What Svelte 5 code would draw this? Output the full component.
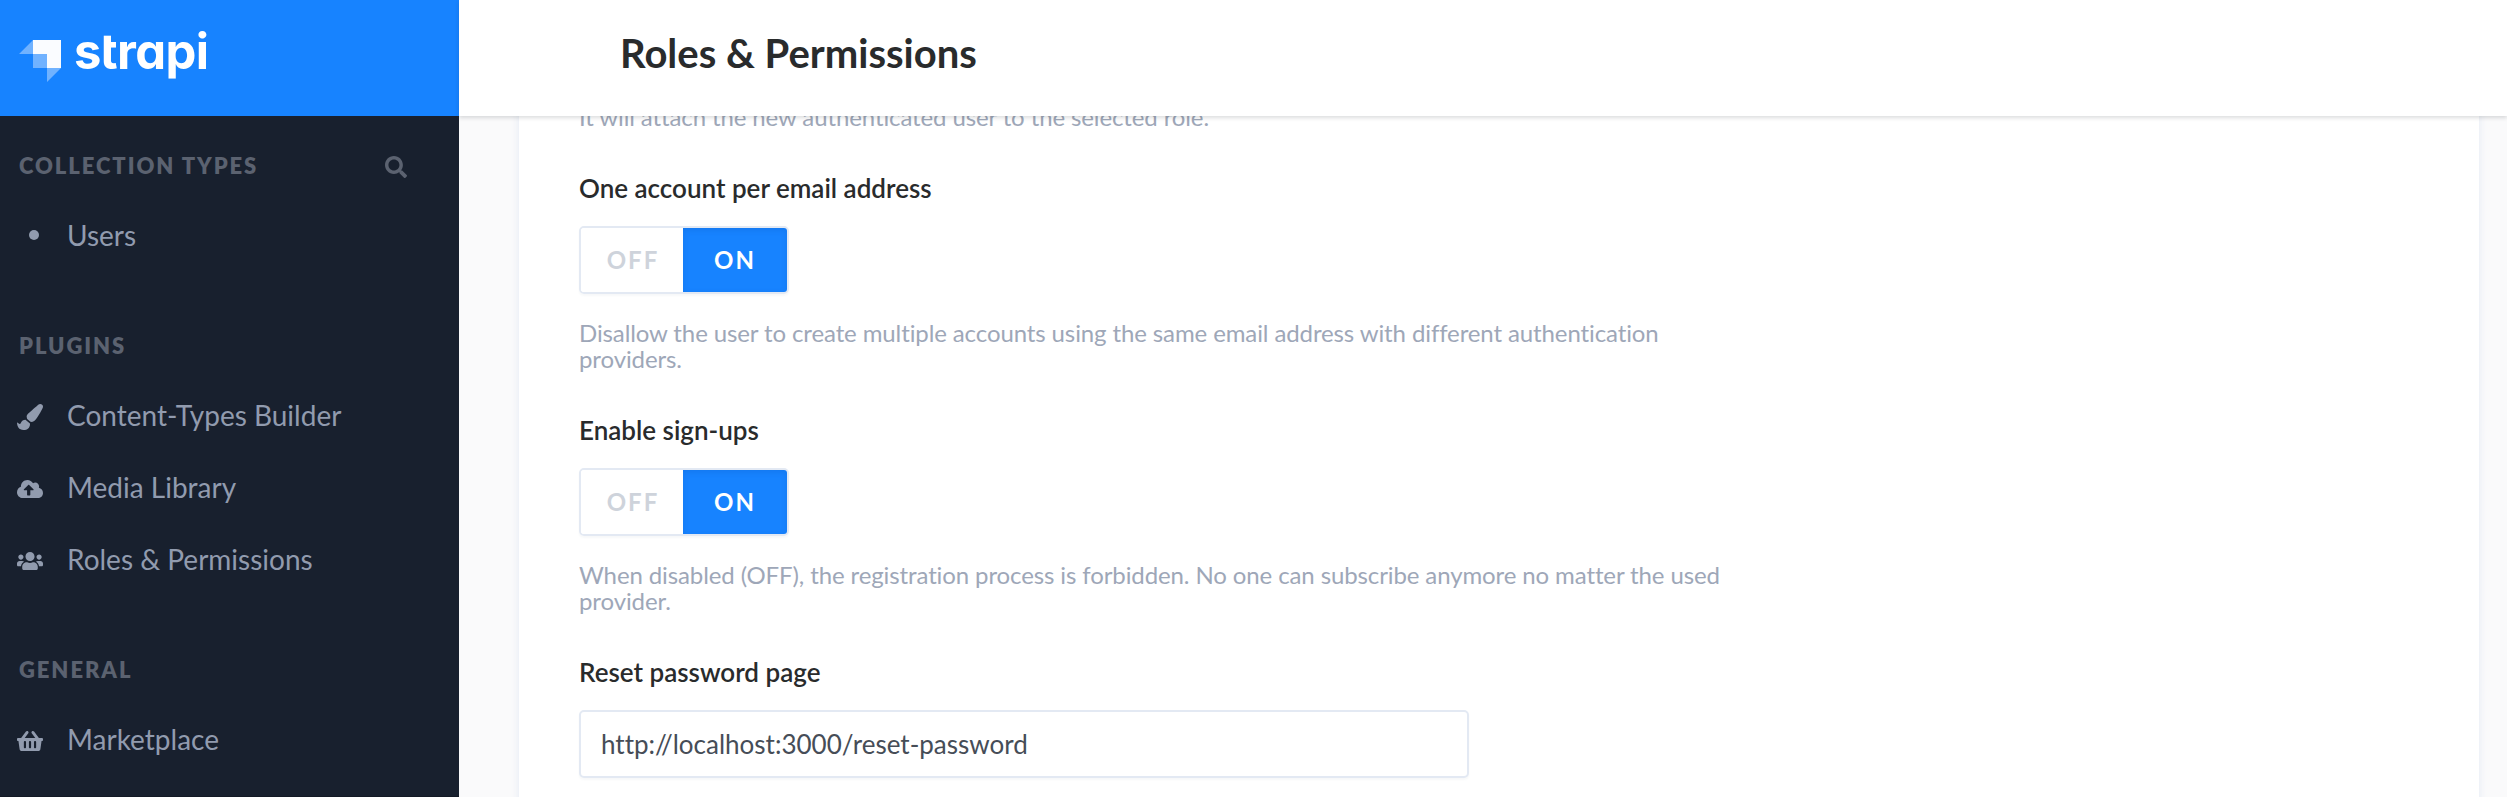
<script>
  const icons = {
    brush: {
      box: '0 0 512 512',
      d: 'M167.02 309.34c-40.12 2.58-76.53 17.86-97.19 72.3-2.35 6.21-8 9.98-14.59 9.98-11.11 0-45.46-27.67-55.25-34.35C0 439.62 37.93 512 128 512c75.86 0 128-43.77 128-120.19 0-3.11-.65-6.08-.97-9.13l-88.01-73.34zM457.89 0c-15.16 0-29.37 6.71-40.21 16.45C213.27 199.05 192 203.34 192 257.09c0 13.7 3.25 26.76 8.73 38.7l63.82 53.18c7.21 1.8 14.64 3.03 22.39 3.03 62.11 0 98.11-45.47 211.16-256.46 7.38-14.35 13.9-29.85 13.9-45.99C512 20.64 486 0 457.89 0z'
    },
    cloud: {
      box: '0 0 640 512',
      d: 'M537.6 226.6c4.1-10.7 6.4-22.4 6.4-34.6 0-53-43-96-96-96-19.7 0-38.1 6-53.3 16.2C367 64.2 315.3 32 256 32c-88.4 0-160 71.6-160 160 0 2.7.1 5.4.2 8.1C40.2 219.8 0 273.2 0 336c0 79.5 64.5 144 144 144h368c70.7 0 128-57.3 128-128 0-61.9-44-113.6-102.4-125.4zM393.4 288H328v112c0 8.8-7.2 16-16 16h-48c-8.8 0-16-7.2-16-16V288h-65.4c-14.3 0-21.4-17.2-11.3-27.3l105.4-105.4c6.2-6.2 16.4-6.2 22.6 0l105.4 105.4c10.1 10.1 2.9 27.3-11.3 27.3z'
    },
    users: {
      box: '0 0 640 512',
      d: 'M96 224c35.3 0 64-28.7 64-64s-28.7-64-64-64-64 28.7-64 64 28.7 64 64 64zm448 0c35.3 0 64-28.7 64-64s-28.7-64-64-64-64 28.7-64 64 28.7 64 64 64zm32 32h-64c-17.6 0-33.5 7.1-45.1 18.6 40.3 22.1 68.9 62 75.1 109.4h66c17.7 0 32-14.3 32-32v-32c0-35.3-28.7-64-64-64zm-256 0c61.9 0 112-50.1 112-112S381.9 32 320 32 208 82.1 208 144s50.1 112 112 112zm76.8 32h-8.3c-20.8 10-43.9 16-68.5 16s-47.6-6-68.5-16h-8.3C179.6 288 128 339.6 128 403.2V432c0 26.5 21.5 48 48 48h288c26.5 0 48-21.5 48-48v-28.8c0-63.6-51.6-115.2-115.2-115.2zm-223.7-13.4C161.5 263.1 145.6 256 128 256H64c-35.3 0-64 28.7-64 64v32c0 17.7 14.3 32 32 32h65.9c6.3-47.4 34.9-87.3 75.2-109.4z'
    },
    basket: {
      box: '0 0 576 512',
      d: 'M576 216v16c0 13.255-10.745 24-24 24h-8l-26.113 182.788C514.509 462.435 494.257 480 470.37 480H105.63c-23.887 0-44.139-17.565-47.518-41.212L32 256h-8c-13.255 0-24-10.745-24-24v-16c0-13.255 10.745-24 24-24h67.341l106.78-146.821c10.395-14.292 30.407-17.453 44.701-7.058 14.293 10.395 17.453 30.408 7.058 44.701L170.477 192h235.046L326.12 82.821c-10.395-14.292-7.234-34.306 7.059-44.701 14.291-10.395 34.306-7.235 44.701 7.058L484.659 192H552c13.255 0 24 10.745 24 24zM312 392V280c0-13.255-10.745-24-24-24s-24 10.745-24 24v112c0 13.255 10.745 24 24 24s24-10.745 24-24zm112 0V280c0-13.255-10.745-24-24-24s-24 10.745-24 24v112c0 13.255 10.745 24 24 24s24-10.745 24-24zm-224 0V280c0-13.255-10.745-24-24-24s-24 10.745-24 24v112c0 13.255 10.745 24 24 24s24-10.745 24-24z'
    }
  };

  const sections = [
    { title: 'COLLECTION TYPES', search: true, links: [{ label: 'Users' }] },
    {
      title: 'PLUGINS',
      links: [
        { label: 'Content-Types Builder', icon: 'brush' },
        { label: 'Media Library', icon: 'cloud' },
        { label: 'Roles & Permissions', icon: 'users' }
      ]
    },
    { title: 'GENERAL', links: [{ label: 'Marketplace', icon: 'basket' }] }
  ];

  let toggles = $state([
    {
      label: 'One account per email address',
      on: true,
      help: 'Disallow the user to create multiple accounts using the same email address with different authentication providers.'
    },
    {
      label: 'Enable sign-ups',
      on: true,
      help: 'When disabled (OFF), the registration process is forbidden. No one can subscribe anymore no matter the used provider.'
    }
  ]);
  let resetUrl = $state('http://localhost:3000/reset-password');
</script>

<div class="app">
  <aside class="sidebar">
    <div class="brand">
      <svg class="mark" viewBox="0 0 42 42" aria-hidden="true">
        <path fill="#70b2ff" d="M0 14 14 0v14zM28 28h14L28 42zM14 14h14v14H14z" />
        <path fill="#fafcff" d="M14 0h28v28H28V14H14z" />
      </svg>
      <span class="wordmark">strapi</span>
    </div>
    <nav>
      {#each sections as section}
        <section>
          <h2>
            {section.title}
            {#if section.search}
              <svg class="search" viewBox="0 0 512 512" aria-hidden="true">
                <path d="M505 442.7L405.3 343c-4.5-4.5-10.6-7-17-7H372c27.6-35.3 44-79.7 44-128C416 93.1 322.9 0 208 0S0 93.1 0 208s93.1 208 208 208c48.3 0 92.7-16.4 128-44v16.3c0 6.4 2.5 12.5 7 17l99.7 99.7c9.4 9.4 24.6 9.4 33.9 0l28.3-28.3c9.4-9.4 9.4-24.6.1-34zM208 336c-70.7 0-128-57.2-128-128 0-70.7 57.2-128 128-128 70.7 0 128 57.2 128 128 0 70.7-57.2 128-128 128z" />
              </svg>
            {/if}
          </h2>
          <ul>
            {#each section.links as link}
              <li>
                {#if link.icon}
                  <svg class="icon" viewBox={icons[link.icon].box} aria-hidden="true">
                    <path d={icons[link.icon].d} />
                  </svg>
                {:else}
                  <span class="dot"></span>
                {/if}
                <span>{link.label}</span>
              </li>
            {/each}
          </ul>
        </section>
      {/each}
    </nav>
  </aside>

  <div class="page">
    <header><h1>Roles &amp; Permissions</h1></header>
    <main>
      <div class="card">
        <p class="help first">It will attach the new authenticated user to the selected role.</p>
        {#each toggles as field}
          <div class="field">
            <div class="label">{field.label}</div>
            <div class="toggle">
              <button class:active={!field.on} class="off" onclick={() => (field.on = false)}>OFF</button>
              <button class:active={field.on} onclick={() => (field.on = true)}>ON</button>
            </div>
            <p class="help">{field.help}</p>
          </div>
        {/each}
        <div class="field">
          <label class="label" for="reset">Reset password page</label>
          <input id="reset" type="text" bind:value={resetUrl} />
        </div>
      </div>
    </main>
  </div>
</div>

<style>
  * {
    box-sizing: border-box;
  }
  .app {
    display: flex;
    height: 797px;
    overflow: hidden;
    font-family: Lato, sans-serif;
    font-variant-ligatures: none;
    background: #fafafb;
  }
  .sidebar {
    flex: none;
    width: 459px;
    height: 797px;
    background: #18202e;
    border-bottom: 1px solid #131925;
  }
  .brand {
    display: flex;
    align-items: flex-start;
    height: 116px;
    padding: 40px 0 0 19px;
    background: #1783ff;
  }
  .mark {
    flex: none;
    width: 42px;
    height: 42px;
  }
  .wordmark {
    margin: -18px 0 0 13px;
    color: #fff;
    font-family: Inter, sans-serif;
    font-size: 49px;
    font-weight: 650;
    line-height: 60px;
    font-variant-ligatures: normal;
    font-feature-settings: 'cv11' 1, 'salt' 1;
    letter-spacing: -0.6px;
  }
  nav {
    display: flex;
    flex-direction: column;
    gap: 59px;
    padding-top: 34px;
  }
  h2 {
    display: flex;
    justify-content: space-between;
    align-items: center;
    height: 32px;
    margin: 0 0 17px;
    padding: 0 52px 0 19px;
    color: #5b6270;
    font-size: 22px;
    font-weight: 800;
    line-height: 32px;
    letter-spacing: 1.93px;
  }
  .search {
    width: 22px;
    height: 22px;
    margin-top: 2px;
    fill: #5b6270;
  }
  ul {
    margin: 0;
    padding: 0;
    list-style: none;
  }
  li {
    display: flex;
    align-items: center;
    height: 72px;
    padding-left: 17px;
    color: #919bae;
    font-size: 28px;
    line-height: 72px;
  }
  .icon {
    width: 26px;
    height: 26px;
    margin: 4px 24px 0 0;
    fill: #919bae;
  }
  .dot {
    width: 10px;
    height: 10px;
    margin: 0 28px 0 12px;
    border-radius: 50%;
    background: #919bae;
  }
  .page {
    flex: 1;
    display: flex;
    flex-direction: column;
    min-width: 0;
  }
  header {
    flex: none;
    z-index: 1;
    height: 116px;
    padding: 28px 0 0 161px;
    background: #fff;
    box-shadow: 0 2px 4px rgba(40, 42, 49, 0.16);
  }
  h1 {
    margin: 0;
    color: #292b2c;
    font-size: 40px;
    font-weight: 700;
    line-height: 50px;
  }
  main {
    flex: 1;
    min-height: 0;
    overflow: hidden;
    padding: 0 28px 0 60px;
  }
  .card {
    height: 860px;
    margin-top: -52px;
    padding: 40px 60px 0;
    background: #fff;
    box-shadow: 0 4px 8px #e3e9f3;
  }
  .field {
    width: 1160px;
    margin-top: 42px;
  }
  .label {
    display: block;
    height: 32px;
    margin-bottom: 22px;
    color: #292b2c;
    font-size: 26px;
    font-weight: 600;
    line-height: 32px;
  }
  .help {
    margin: 26px 0 0;
    color: #9ea7b8;
    font-size: 24px;
    line-height: 26px;
    letter-spacing: -0.11px;
  }
  .help.first {
    margin: 0;
  }
  .toggle {
    display: flex;
    width: 210px;
    height: 68px;
    border: 2px solid #e3e9f3;
    border-radius: 5px;
    overflow: hidden;
    box-shadow: 0 2px 2px rgba(104, 118, 142, 0.05);
  }
  button {
    width: 104px;
    padding: 0;
    border: 0;
    background: #fff;
    color: #ced3db;
    font: 700 24px/64px Lato, sans-serif;
    letter-spacing: 2px;
  }
  button.off {
    width: 102px;
    padding-left: 2px;
  }
  button.active {
    background: #1783ff;
    color: #fff;
    box-shadow: inset 0 2px 6px rgba(0, 60, 150, 0.16);
  }
  input {
    display: block;
    width: 890px;
    height: 68px;
    padding: 0 20px;
    border: 2px solid #e3e9f3;
    border-radius: 5px;
    outline: 0;
    background: #fff;
    color: #464d57;
    font: 400 26px/64px Lato, sans-serif;
    font-variant-ligatures: none;
    box-shadow: 0 2px 2px rgba(104, 118, 142, 0.05);
  }
</style>
